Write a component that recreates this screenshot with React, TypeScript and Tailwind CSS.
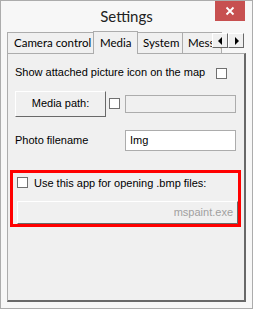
import React from "react";

const seg = { fontFamily: 'Lato, "Noto Sans", sans-serif' };
const tah = { fontFamily: '"Liberation Sans", Arial, sans-serif' };

function Check({ className = "" }: { className?: string }) {
  return <div className={"w-[11px] h-[11px] border border-[#707070] bg-white shrink-0 " + className} />;
}

export default function App() {
  return (
    <div className="relative w-[253px] h-[309px] border border-[#acacac] bg-[#f7f7f7] overflow-hidden">
      <div className="h-[29px] flex justify-center pt-[4px] text-[15px] text-[#222]" style={seg}>
        Settings
      </div>
      <div className="absolute top-0 right-[7px] w-[30px] h-[20px] bg-[#c75050] flex items-center justify-center">
        <svg width="10" height="10" viewBox="0 0 10 10">
          <path d="M1.5 1.5 L8.5 8.5 M8.5 1.5 L1.5 8.5" stroke="#fff" strokeWidth="1.8" />
        </svg>
      </div>
      {/* tabs */}
      <div className="ml-[6px] flex items-end h-[23px] text-[11.5px] text-black relative whitespace-nowrap" style={seg}>
        <div className="h-[21px] w-[87px] border border-[#acacac] border-b-0 bg-[#f0f0f0] flex items-center pl-[6px]">Camera control</div>
        <div className="h-[23px] w-[45px] border border-[#acacac] border-b-0 bg-[#f0f0f0] -mb-[1px] -ml-[1px] z-10 flex items-start pt-[2px] pl-[6px]">Media</div>
        <div className="h-[21px] w-[46px] border border-[#acacac] border-b-0 bg-[#f0f0f0] -ml-[1px] flex items-center pl-[5px]">System</div>
        <div className="h-[21px] w-[40px] border border-[#acacac] border-b-0 bg-[#f0f0f0] -ml-[1px] flex items-center pl-[5px] overflow-hidden">Messages</div>
        <div className="absolute left-[205px] top-[3px] flex">
          <div className="w-[16px] h-[15px] bg-[#f0f0f0] border border-[#fff] border-r-[#696969] border-b-[#696969] flex items-center justify-center">
            <svg width="5" height="8" viewBox="0 0 5 8"><path d="M4 0 L0 4 L4 8 Z" fill="#000" /></svg>
          </div>
          <div className="w-[16px] h-[15px] bg-[#f0f0f0] border border-[#fff] border-r-[#696969] border-b-[#696969] flex items-center justify-center">
            <svg width="5" height="8" viewBox="0 0 5 8"><path d="M1 0 L5 4 L1 8 Z" fill="#000" /></svg>
          </div>
        </div>
      </div>
      {/* panel */}
      <div className="ml-[6px] w-[239px] h-[249px] bg-[#f0f0f0] border border-[#acacac] border-r-[#696969] border-b-[#696969] border-r-2 border-b-2 text-[11px] text-black whitespace-nowrap" style={tah}>
        <div className="flex items-center pt-[10px] pl-[7px]">
          <span className="w-[201px]">Show attached picture icon on the map</span>
          <Check className="mt-[2px]" />
        </div>
        <div className="flex items-center mt-[10px] pl-[7px]">
          <div className="w-[91px] h-[26px] bg-[#f0f0f0] border border-[#fff] border-r-[#696969] border-b-[#696969] flex items-center justify-center">Media path:</div>
          <Check className="ml-[3px]" />
          <div className="ml-[5px] w-[111px] h-[18px] border border-[#acacac] bg-[#f0f0f0]" />
        </div>
        <div className="flex items-center mt-[13px] pl-[7px]">
          <span className="w-[110px]">Photo filename</span>
          <div className="w-[111px] h-[21px] border border-[#acacac] bg-white flex items-center pl-[4px]">Img</div>
        </div>
        <div className="ml-[2px] mt-[19px] w-[231px] h-[57px] border-[3px] border-[#ff0000] pl-[4px] pt-[2px]">
          <div className="flex items-center">
            <Check />
            <span className="ml-[6px]">Use this app for opening .bmp files:</span>
          </div>
          <div className="mt-[10px] w-[221px] h-[23px] bg-[#f0f0f0] border border-[#fff] border-r-[#696969] border-b-[#696969] flex items-center justify-end pr-[4px] text-[#a0a0a0]">mspaint.exe</div>
        </div>
      </div>
    </div>
  );
}
